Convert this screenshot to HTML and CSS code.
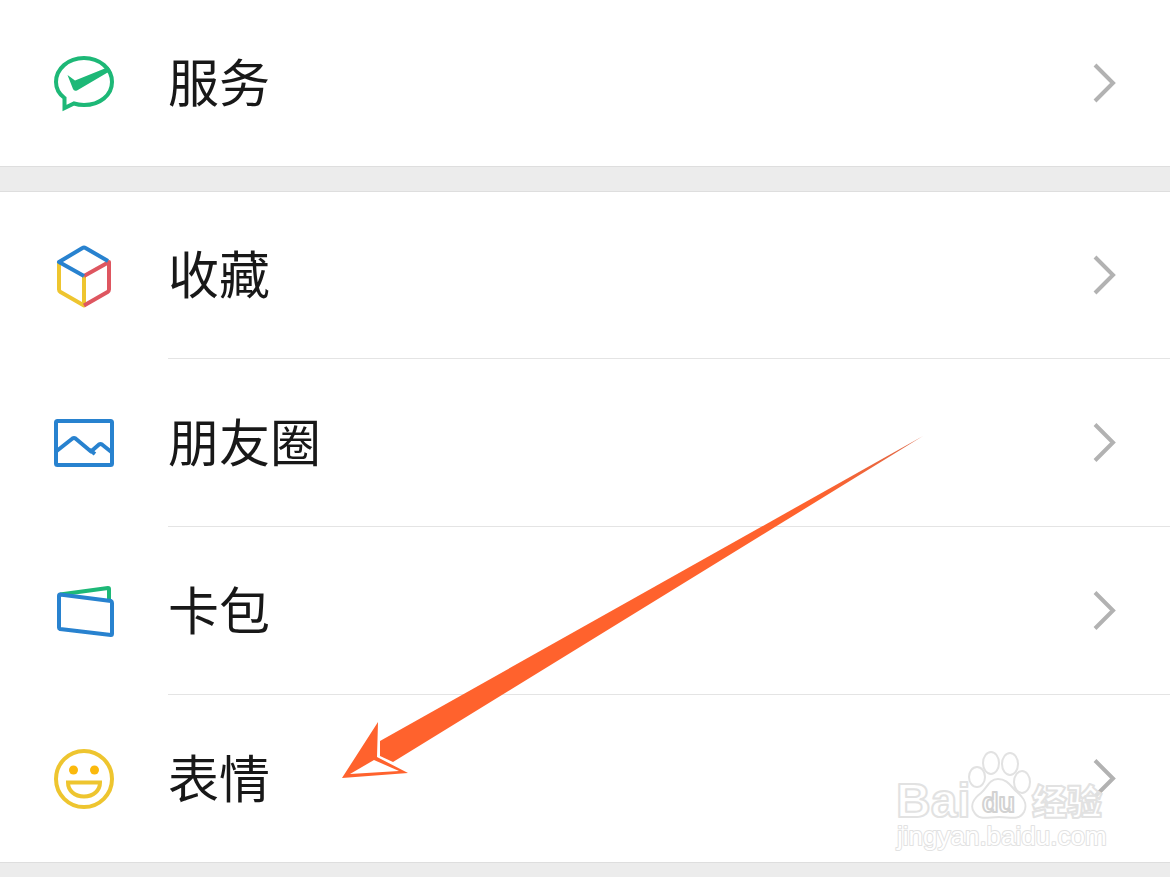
FILE: index.html
```
<!DOCTYPE html>
<html lang="zh-CN">
<head>
<meta charset="utf-8">
<meta name="viewport" content="width=device-width, initial-scale=1">
<title>我</title>
<link rel="stylesheet" href="styles.css">
</head>
<body>
<main class="page">
  <nav class="group">
    <a class="row" href="#services">
      <svg class="icon" viewBox="0 0 64 64" aria-hidden="true">
        <path class="line sharp green" d="M12.500 57V47C7 43 4 37.500 4 31C4 18 16 7 32 7S60 18 60 31S48 54 32 54C28.500 54 25 53.500 22 52.500Z"/>
        <path class="fill green" d="M15.500 24L23 29.500L56.500 16L59 19.500L25 39.500Q22 40.500 21 38Z"/>
      </svg>
      <span class="label">服务</span>
      <svg class="chevron" viewBox="0 0 24 40" aria-hidden="true"><path d="M3 2L21 20L3 38"/></svg>
    </a>
  </nav>
  <nav class="group">
    <a class="row" href="#favorites">
      <svg class="icon" viewBox="0 0 64 64" aria-hidden="true">
        <path class="line yellow" d="M7 18V45.500Q7 47 8.500 48L32 61.500V32"/>
        <path class="line red" d="M32 61.500L55.500 48Q57 47 57 45.500V18L32 32"/>
        <path class="line blue" d="M32 32L7 18L30.500 4Q32 3 33.500 4L56 17"/>
      </svg>
      <span class="label">收藏</span>
      <svg class="chevron" viewBox="0 0 24 40" aria-hidden="true"><path d="M3 2L21 20L3 38"/></svg>
    </a>
    <a class="row" href="#moments">
      <svg class="icon" viewBox="0 0 64 64" aria-hidden="true">
        <rect class="line blue" x="4" y="10" width="56" height="44" rx="1.500"/>
        <path class="line blue" d="M4 40.500L20.500 27.500Q22 26.500 23.500 27.500L39 40.500L47 33.500Q48.500 32.500 50 33.500L60 41.500M37 38.500L43 43"/>
      </svg>
      <span class="label">朋友圈</span>
      <svg class="chevron" viewBox="0 0 24 40" aria-hidden="true"><path d="M3 2L21 20L3 38"/></svg>
    </a>
    <a class="row" href="#cards">
      <svg class="icon" viewBox="0 0 64 64" aria-hidden="true">
        <path class="line green" d="M8 15.500L56 9Q57 9 57 10V20"/>
        <path class="line blue" d="M8 15.500L59 22Q60 22.500 60 24V54.500Q60 56 59 56L8 50Q7 49.500 7 48.500V17Q7 15.500 8 15.500Z"/>
      </svg>
      <span class="label">卡包</span>
      <svg class="chevron" viewBox="0 0 24 40" aria-hidden="true"><path d="M3 2L21 20L3 38"/></svg>
    </a>
    <a class="row" href="#stickers">
      <svg class="icon" viewBox="0 0 64 64" aria-hidden="true">
        <circle class="line yellow" cx="32" cy="32" r="28"/>
        <circle class="fill amber" cx="21.500" cy="23" r="4.500"/>
        <circle class="fill amber" cx="42.500" cy="23" r="4.500"/>
        <path class="line sharp yellow" d="M16 35.500H48C48 43.500 41.500 49.500 32 49.500S16 43.500 16 35.500Z"/>
      </svg>
      <span class="label">表情</span>
      <svg class="chevron" viewBox="0 0 24 40" aria-hidden="true"><path d="M3 2L21 20L3 38"/></svg>
    </a>
    <svg class="arrow" viewBox="0 0 584 346" aria-hidden="true">
      <defs>
        <linearGradient id="shaft" x1="0" y1="1" x2="1" y2="0">
          <stop offset="0.800" stop-color="#ff622d"/>
          <stop offset="1" stop-color="#dd6949"/>
        </linearGradient>
      </defs>
      <path fill="url(#shaft)" d="M39 306L582 1L52 327L39 321Z"/>
      <path fill="#ff622d" d="M1 343L37 287L36 322L67 338Z"/>
      <path fill="#fff" d="M9 339L33 325L58 336Z"/>
    </svg>
    <svg class="watermark" viewBox="0 0 220 110" role="img" aria-label="Baidu 经验 jingyan.baidu.com">
      <g class="mark">
        <text class="brand" x="4" y="67">Bai</text>
        <ellipse cx="85" cy="27" rx="8" ry="10"/>
        <ellipse cx="99" cy="13" rx="8" ry="11"/>
        <ellipse cx="118" cy="14" rx="8" ry="11"/>
        <ellipse cx="130" cy="32" rx="8" ry="11"/>
        <path d="M106 29C97 29 95 38 89 43C81 49 78 56 82 62C87 71 96 67 107 67S127 71 132 62C136 54 132 48 125 42C119 37 116 29 106 29Z"/>
        <text class="du" x="90" y="62">du</text>
        <text class="cjk" x="140" y="65">经验</text>
        <text class="url" x="5" y="95">jingyan.baidu.com</text>
      </g>
    </svg>
  </nav>
</main>
</body>
</html>
```
FILE: styles.css
```
* { box-sizing: border-box; }

body {
  margin: 0;
  background: #ececec;
  font-family: "Noto Sans CJK SC", sans-serif;
  color: #181818;
}

.page {
  display: flex;
  flex-direction: column;
  gap: 24px;
}

.group {
  position: relative;
  background: #fff;
  border-bottom: 1px solid #dedede;
}

.group + .group { border-top: 1px solid #dedede; }

.row {
  display: flex;
  align-items: center;
  height: 168px;
  padding-left: 52px;
  color: inherit;
  text-decoration: none;
}

.row:first-child,
.row:last-of-type { height: 167px; }

.group:first-child .row { height: 166px; }

.icon {
  flex: none;
  width: 64px;
  height: 64px;
  margin-right: 52px;
}

.label {
  flex: 1;
  display: flex;
  align-items: center;
  align-self: stretch;
  padding-bottom: 6px;
  font-size: 51px;
  line-height: 72px;
  border-bottom: 1px solid #e4e4e4;
}

.chevron {
  flex: none;
  align-self: stretch;
  width: 78px;
  height: auto;
  padding-right: 54px;
  border-bottom: 1px solid #e4e4e4;
}

.row:last-of-type .label,
.row:last-of-type .chevron { border-bottom: 0; }

.chevron path {
  fill: none;
  stroke: #b2b2b2;
  stroke-width: 4;
}

.line {
  fill: none;
  stroke: currentColor;
  stroke-width: 4;
  stroke-linejoin: round;
}

.sharp { stroke-linejoin: miter; }
.fill { fill: currentColor; }
.green { color: #1db877; }
.blue { color: #2882cf; }
.red { color: #de5660; }
.yellow { color: #eec52f; }
.amber { color: #fbb90c; }

.arrow {
  position: absolute;
  left: 341px;
  bottom: 81px;
  width: 584px;
  height: 346px;
  pointer-events: none;
}

.watermark {
  position: absolute;
  right: 58px;
  bottom: 2px;
  width: 220px;
  height: 110px;
  pointer-events: none;
}

.mark {
  fill: #fff;
  fill-opacity: 0.6;
  stroke: #e2e2e2;
  stroke-width: 2;
  stroke-linejoin: round;
}

.brand {
  font: bold 48px "Liberation Sans", sans-serif;
}

.du {
  font: bold 27px "Liberation Sans", sans-serif;
  stroke: #d2d2d2;
}

.cjk {
  font: 900 35px "Noto Sans CJK SC", sans-serif;
}

.url {
  font: 26px "Liberation Sans", sans-serif;
  paint-order: stroke;
  fill-opacity: 1;
}
```
